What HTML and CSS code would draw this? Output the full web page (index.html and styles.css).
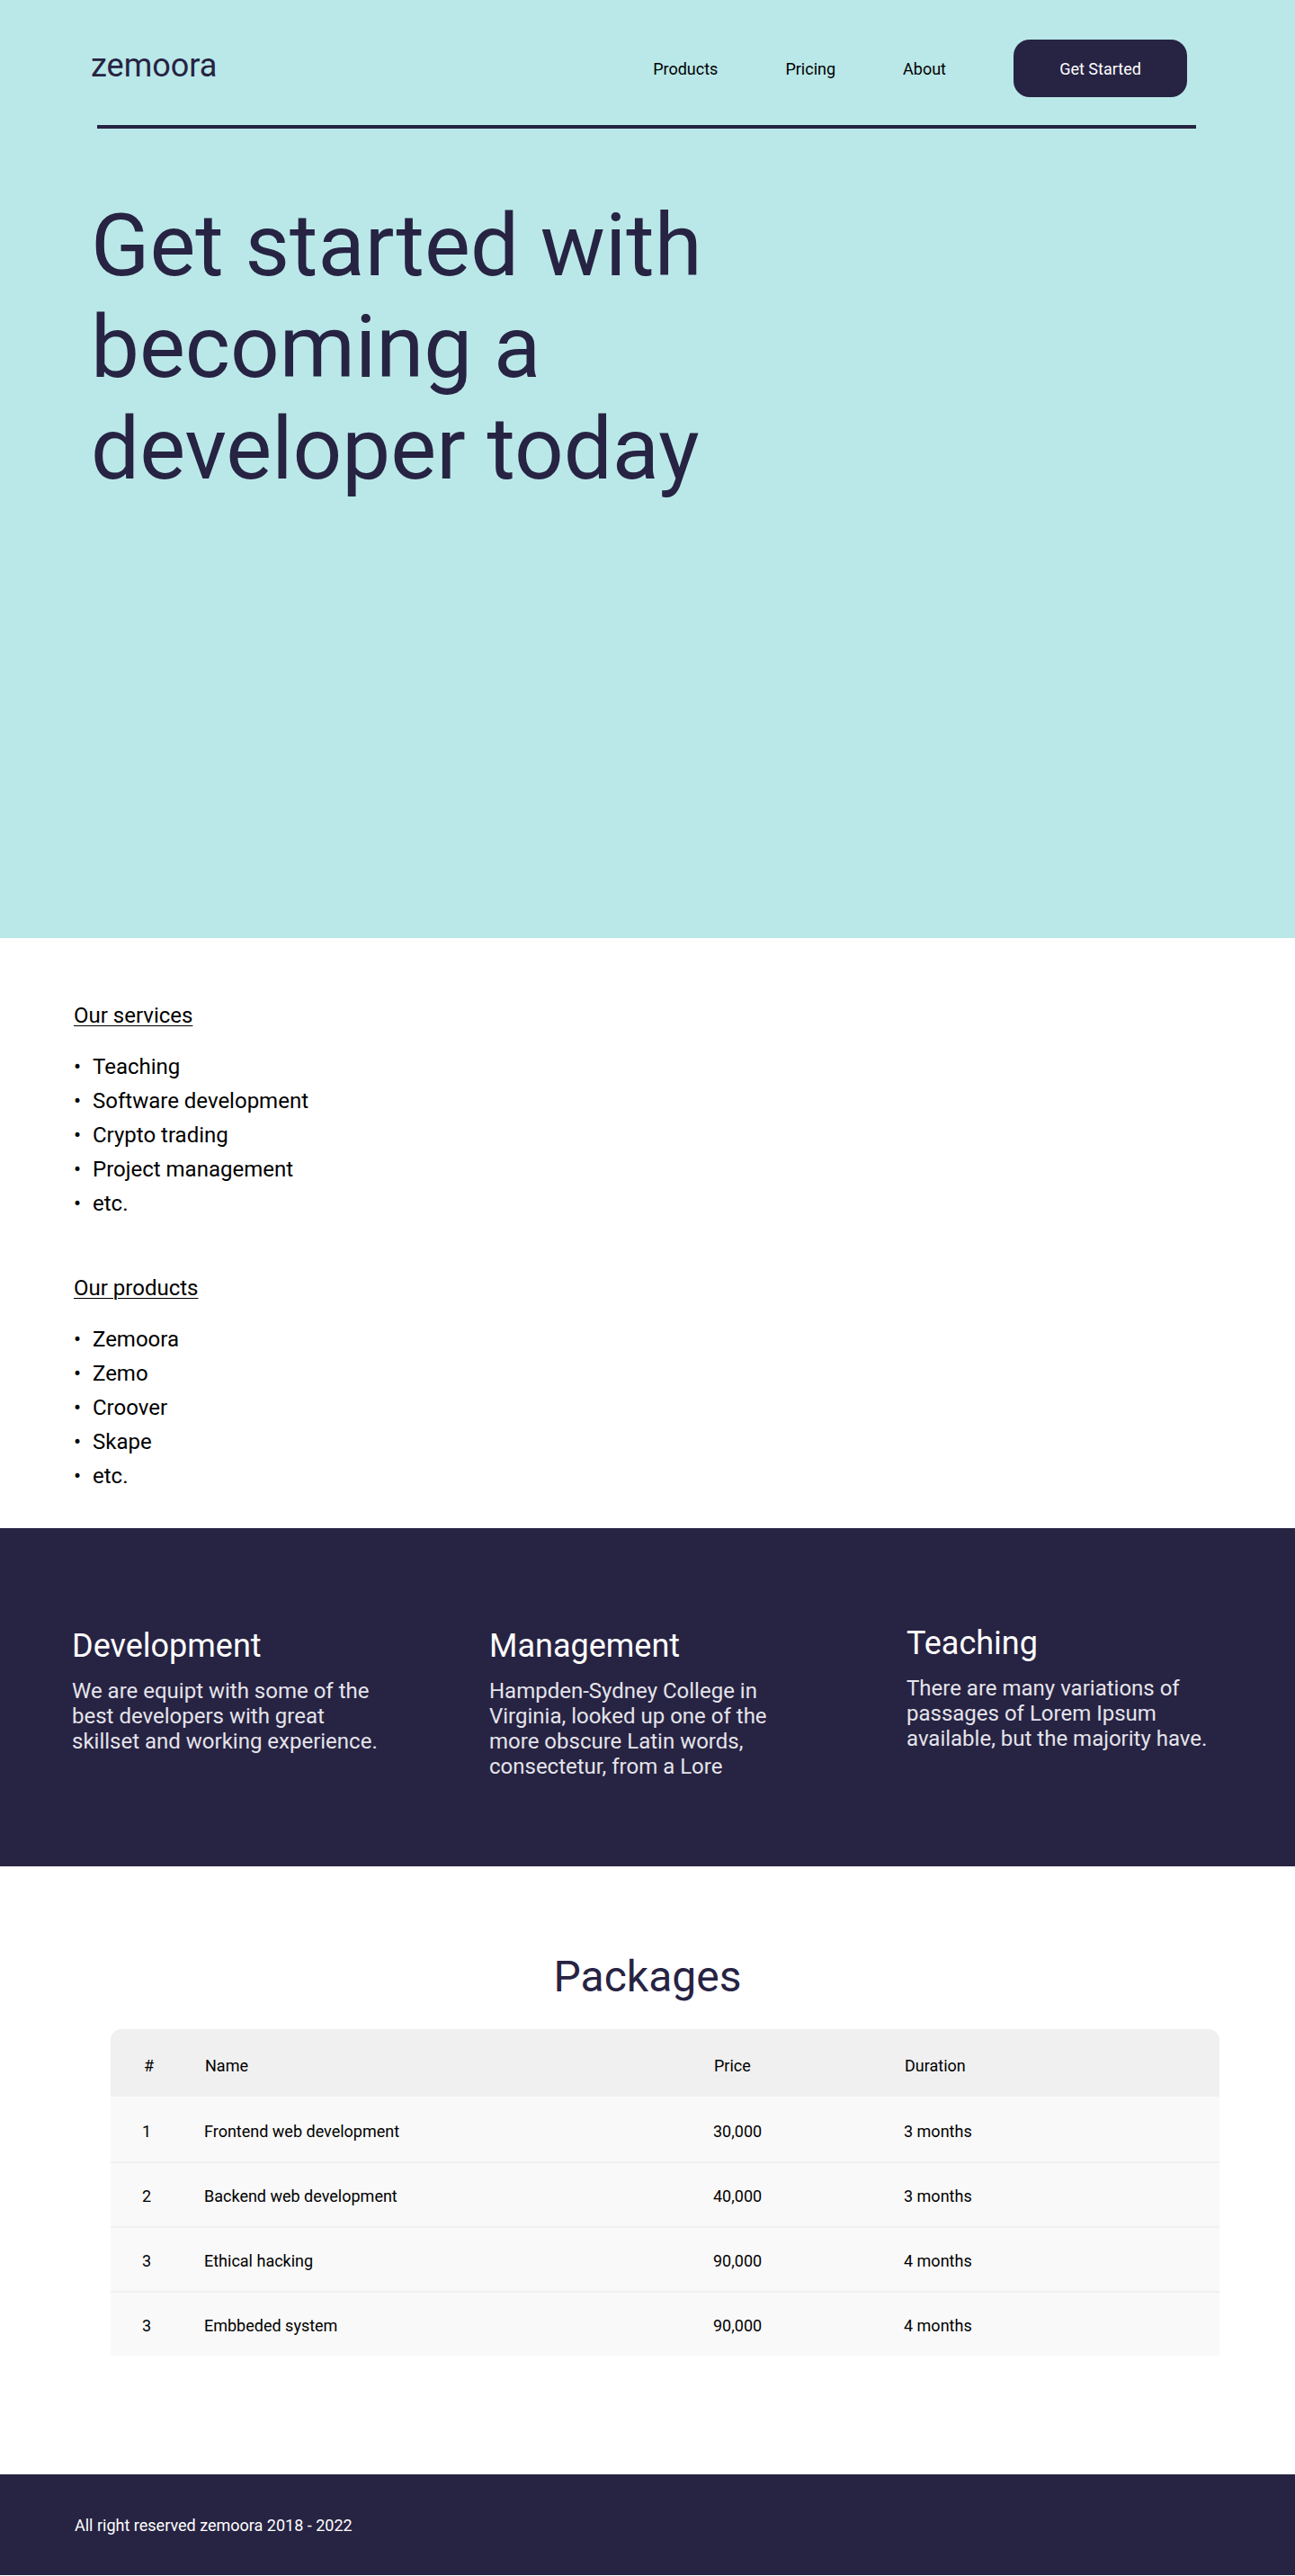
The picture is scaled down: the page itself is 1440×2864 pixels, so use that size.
FILE: index.html
```html
<!DOCTYPE html>
<html lang="en">
<head>
<meta charset="utf-8">
<title>zemoora</title>
<link rel="stylesheet" href="styles.css">
</head>
<body>
<section class="hero">
  <header class="topbar">
    <div class="logo">zemoora</div>
    <nav class="nav">
      <a class="nav-link" href="#">Products</a>
      <a class="nav-link" href="#">Pricing</a>
      <a class="nav-link" href="#">About</a>
      <a class="btn" href="#">Get Started</a>
    </nav>
  </header>
  <div class="rule"></div>
  <h1 class="hero-title">Get started with becoming a developer today</h1>
</section>

<section class="lists">
  <div class="list-block">
    <h3 class="list-title">Our services</h3>
    <ul class="list">
      <li>Teaching</li>
      <li>Software development</li>
      <li>Crypto trading</li>
      <li>Project management</li>
      <li>etc.</li>
    </ul>
  </div>
  <div class="list-block list-block-next">
    <h3 class="list-title">Our products</h3>
    <ul class="list">
      <li>Zemoora</li>
      <li>Zemo</li>
      <li>Croover</li>
      <li>Skape</li>
      <li>etc.</li>
    </ul>
  </div>
</section>

<section class="features">
  <div class="feature">
    <h2 class="feature-title">Development</h2>
    <p class="feature-text">We are equipt with some of the best developers with great skillset and working experience.</p>
  </div>
  <div class="feature">
    <h2 class="feature-title">Management</h2>
    <p class="feature-text">Hampden-Sydney College in Virginia, looked up one of the more obscure Latin words, consectetur, from a Lore</p>
  </div>
  <div class="feature feature-raised">
    <h2 class="feature-title">Teaching</h2>
    <p class="feature-text">There are many variations of passages of Lorem Ipsum available, but the majority have.</p>
  </div>
</section>

<section class="packages">
  <h2 class="packages-title">Packages</h2>
  <table class="table">
    <colgroup>
      <col class="c1"><col class="c2"><col class="c3"><col class="c4">
    </colgroup>
    <thead>
      <tr><th>#</th><th>Name</th><th>Price</th><th>Duration</th></tr>
    </thead>
    <tbody>
      <tr><td>1</td><td>Frontend web development</td><td>30,000</td><td>3 months</td></tr>
      <tr><td>2</td><td>Backend web development</td><td>40,000</td><td>3 months</td></tr>
      <tr><td>3</td><td>Ethical hacking</td><td>90,000</td><td>4 months</td></tr>
      <tr><td>3</td><td>Embbeded system</td><td>90,000</td><td>4 months</td></tr>
    </tbody>
  </table>
</section>

<footer class="footer">All right reserved zemoora 2018 - 2022</footer>
</body>
</html>
```
FILE: styles.css
```css
* { box-sizing: border-box; }

html, body {
  margin: 0;
  padding: 0;
}

body {
  font-family: Roboto, "Liberation Sans", Arial, sans-serif;
  color: #000;
  background: #fff;
}

/* HERO */
.hero {
  background: #bae8e8;
  height: 1043px;
  padding-top: 44px;
}

.topbar {
  display: flex;
  align-items: center;
  justify-content: space-between;
  padding: 0 120px 0 101px;
  height: 64px;
}

.logo {
  font-size: 36px;
  color: #272343;
  line-height: 1;
  margin-top: -6px;
}

.nav {
  display: flex;
  align-items: center;
  gap: 75px;
}

.nav-link {
  font-size: 18px;
  color: #000;
  text-decoration: none;
}

.btn {
  display: flex;
  align-items: center;
  justify-content: center;
  width: 193px;
  height: 64px;
  border-radius: 18px;
  background: #272343;
  color: #fffffe;
  font-size: 18px;
  text-decoration: none;
}

.rule {
  height: 4px;
  background: #272343;
  margin: 31px 110px 0 108px;
}

.hero-title {
  margin: 74px 0 0 101px;
  font-size: 96px;
  font-weight: 400;
  line-height: 113px;
  color: #272343;
  width: 800px;
}

/* LISTS */
.lists {
  padding: 72px 82px 39px;
}

.list-title {
  margin: 0;
  font-size: 24px;
  font-weight: 400;
  text-decoration: underline;
  text-underline-offset: 3px;
  text-decoration-thickness: 1px;
  color: #000;
}

.list {
  margin: 24px 0 0;
  padding-left: 21px;
  list-style: none;
}

.list li {
  font-size: 24px;
  line-height: 38px;
  height: 38px;
  color: #000;
}

.list li::before {
  content: "\2022";
  display: inline-block;
  width: 21px;
  margin-left: -21px;
}

.list-block-next {
  margin-top: 61px;
}

/* FEATURES */
.features {
  background: #272343;
  display: grid;
  grid-template-columns: repeat(3, 350px);
  column-gap: 114px;
  padding: 110px 0 97px 80px;
  align-items: start;
}

.feature-title {
  margin: 0;
  font-size: 36px;
  font-weight: 400;
  color: #fffffe;
  line-height: normal;
}

.feature-text {
  margin: 15px 0 0;
  font-size: 24px;
  line-height: normal;
  color: #e4e4ea;
}

.feature-raised {
  margin-top: -3px;
}

/* PACKAGES */
.packages {
  padding: 94px 0 132px;
}

.packages-title {
  margin: 0;
  text-align: center;
  font-size: 48px;
  font-weight: 400;
  color: #272343;
  line-height: normal;
}

.table {
  margin: 30px 0 0 123px;
  width: 1233px;
  border-collapse: separate;
  border-spacing: 0;
  table-layout: fixed;
  border-radius: 12px 12px 0 0;
  overflow: hidden;
}

.c1 { width: 66px; }
.c2 { width: 566px; }
.c3 { width: 212px; }
.c4 { width: 389px; }

.table th {
  background: #f0f0f0;
  font-size: 18px;
  font-weight: 400;
  text-align: left;
  padding: 30px 0 24px 39px;
  line-height: normal;
  color: #000;
}

.table th:first-child {
  padding-left: 37px;
}

.table td {
  background: #f9f9f9;
  border-top: 2px solid #f0f0f0;
  font-size: 18px;
  padding: 26px 0 23px 38px;
  line-height: normal;
  color: #000;
}

.table td:first-child {
  padding-left: 35px;
}

.table tbody tr:first-child td {
  border-top: 0;
  padding-top: 28px;
}

/* FOOTER */
.footer {
  background: #272343;
  height: 112px;
  padding-left: 83px;
  display: flex;
  align-items: center;
  font-size: 18px;
  color: #fffffe;
}
```
